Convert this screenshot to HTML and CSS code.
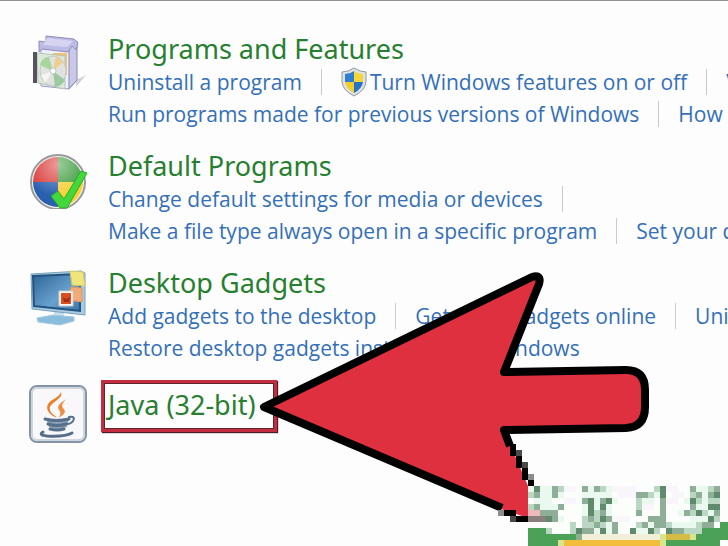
FILE: index.html
```
<!DOCTYPE html>
<html lang="en">
<head>
    <meta charset="UTF-8">
    <title>Control Panel - Programs</title>
    <link rel="stylesheet" href="styles.css">
</head>
<body>
<main class="panel">
    <section class="category">
        <svg class="icon" viewBox="0 0 60 60" aria-hidden="true">
            <path d="M48 55l10-12-10 5z" fill="#d4d2d8"/>
            <path d="M13 12l30 1 5-4v40l-7 8-28-3z" fill="#f0f0fa" stroke="#9a99c2"/>
            <path d="M41 14l8-5v39l-8 9z" fill="#c9c8e8" stroke="#8987b4"/>
            <path d="M11 9l7 1V4l28 3 4 4-2 7-4-4-4 6-26-3-3 3z" fill="#bcbbe3" stroke="#8f8db9"/>
            <path d="M19 6l26 3-6 6-24-2z" fill="#d6d4f1"/>
            <path d="M25 21h14v22H25z" fill="#f1c173"/>
            <path d="M9 21l28 3v33l-27-6z" fill="#dbe8da" stroke="#b6c7ba"/>
            <path d="M5 20h4v31H5z" fill="#55545e"/>
            <ellipse cx="25" cy="39" rx="13" ry="15" fill="#dfe2df" stroke="#c3cac3"/>
            <path d="M25 39L12 33q2-8 9-8z" fill="#a9d69c"/>
            <path d="M25 39l12 9q-4 7-10 7z" fill="#9dc8a2"/>
            <path d="M25 39l3-15 7 6z" fill="#f0cd8c"/>
            <path d="M25 39l-8 12-4-8z" fill="#f7f5f3"/>
            <circle cx="25" cy="39" r="3" fill="#fff" stroke="#c3c5c5"/>
        </svg>
        <div class="content">
            <h2><a href="#">Programs and Features</a></h2>
            <ul class="links">
                <li><a href="#">Uninstall a program</a></li>
                <li>
                    <a href="#" class="admin">
                        <svg class="shield" viewBox="0 0 26 30" aria-hidden="true">
                            <path d="M13 1q6 4 12 4v9q0 9-12 15Q1 23 1 14V5q6 0 12-4z" fill="#dfe3e6" stroke="#8d979f"/>
                            <path d="M13 4v11H4V7q5 0 9-3z" fill="#2e7fd0"/>
                            <path d="M13 4q4 3 9 3v8h-9z" fill="#f6d53a"/>
                            <path d="M4 15h9v11q-8-4-9-11z" fill="#f3cd2c"/>
                            <path d="M13 15h9q-1 7-9 11z" fill="#2873c4"/>
                        </svg>
                        Turn Windows features on or off
                    </a>
                </li>
                <li><a href="#">View installed updates</a></li>
            </ul>
            <ul class="links">
                <li><a href="#">Run programs made for previous versions of Windows</a></li>
                <li><a href="#">How to install a program</a></li>
            </ul>
        </div>
    </section>

    <section class="category">
        <svg class="icon" viewBox="0 0 60 60" aria-hidden="true">
            <defs>
                <radialGradient id="shine" cx="50%" cy="15%" r="65%">
                    <stop offset="0" stop-color="#fff" stop-opacity=".5"/>
                    <stop offset="1" stop-color="#fff" stop-opacity="0"/>
                </radialGradient>
            </defs>
            <circle cx="30" cy="33" r="27" fill="#f3f3f3" stroke="#9a9a9a" stroke-width="2"/>
            <path d="M30 33V8A25 25 0 0 0 5 33z" fill="#d93a38"/>
            <path d="M30 33V8a25 25 0 0 1 25 25z" fill="#3b9a3c"/>
            <path d="M30 33H5a25 25 0 0 0 25 25z" fill="#285fae"/>
            <path d="M30 33h25a25 25 0 0 1-25 25z" fill="#f8cf34"/>
            <circle cx="30" cy="33" r="25" fill="url(#shine)"/>
            <path d="M23 47l7-5 6 8 17-28 6 2-20 35h-7z" fill="#42d83b" stroke="#2cae2b"/>
        </svg>
        <div class="content">
            <h2><a href="#">Default Programs</a></h2>
            <ul class="links trailing">
                <li><a href="#">Change default settings for media or devices</a></li>
            </ul>
            <ul class="links">
                <li><a href="#">Make a file type always open in a specific program</a></li>
                <li><a href="#">Set your default programs</a></li>
            </ul>
        </div>
    </section>

    <section class="category">
        <svg class="icon" viewBox="0 0 60 60" aria-hidden="true">
            <defs>
                <linearGradient id="screen" x1="0" y1="0" x2="1" y2="1">
                    <stop offset="0" stop-color="#2d6496"/>
                    <stop offset=".6" stop-color="#68a2cf"/>
                    <stop offset="1" stop-color="#3673a8"/>
                </linearGradient>
            </defs>
            <path d="M26 44l10 2v8H26z" fill="#c8dfe9"/>
            <path d="M9 52l16-3 21 2v4l-14 4-22-3z" fill="#8abddc" stroke="#a3cce1"/>
            <path d="M3 8l50-3 4 2v42L4 43z" fill="#a9cbe0" stroke="#78a1bd"/>
            <path d="M5 10l47-2v37L6 40z" fill="url(#screen)" stroke="#235481" stroke-width="2"/>
            <path d="M42 5l13 1 2 14-13-1z" fill="#f1e47c" stroke="#d6cc66"/>
            <path d="M43 21l11 1v14l-14-2z" fill="#f2ab78" stroke="#e0965f"/>
            <path d="M31 25h14v15H31z" fill="#fbf8f4" stroke="#cfcac4"/>
            <path d="M33 27h10v11H33z" fill="#d94f21"/>
            <path d="M35 31l3 2 4-2-1 5h-5z" fill="#a92b14"/>
        </svg>
        <div class="content">
            <h2><a href="#">Desktop Gadgets</a></h2>
            <ul class="links">
                <li><a href="#">Add gadgets to the desktop</a></li>
                <li><a href="#">Get more gadgets online</a></li>
                <li><a href="#">Uninstall a gadget</a></li>
            </ul>
            <ul class="links">
                <li><a href="#">Restore desktop gadgets installed with Windows</a></li>
            </ul>
        </div>
    </section>

    <section class="category">
        <svg class="icon" viewBox="0 0 60 60" aria-hidden="true">
            <rect x="2" y="3" width="56" height="56" rx="7" fill="#f8f8fa" stroke="#8493a5" stroke-width="2"/>
            <rect x="4" y="5" width="52" height="52" rx="5" fill="none" stroke="#cdd6de" stroke-width="2"/>
            <path d="M33 9c3 8-13 10-11 18 1 4 5 5 7 8-7-3-12-8-9-14 3-5 11-6 13-12z" fill="#e9812e"/>
            <path d="M38 16c-5 4-10 6-7 11 2 3 2 5-1 8 8-4 8-7 5-10-2-3 0-5 3-9z" fill="#ee8c43"/>
            <path d="M18 35q12 4 23 0l-2 9q-9 4-18 0z" fill="#8fa2b5"/>
            <g fill="none" stroke="#56708b" stroke-width="3" stroke-linecap="round">
                <path d="M17 36q11 3 24 0M20 41q9 3 18 0M22 46q7 2 14 0"/>
                <path d="M41 34q7-1 4 4-2 3-6 3" stroke-width="2"/>
                <path d="M15 49q-5 3 4 4 18 1 25-3"/>
            </g>
        </svg>
        <div class="content">
            <h2 class="marked"><a href="#">Java (32-bit)</a></h2>
        </div>
    </section>
</main>

<svg class="arrow" width="728" height="546" viewBox="0 0 728 546" aria-hidden="true">
    <path d="M264 407L532 277q10-3 7 7l-35 88 122-2q19 0 19 20v17q0 20-19 21l-122 2 24 56v32l-30-10z" fill="#df3040"/>
    <path d="M510 446L504 430l122-2q19-1 19-21v-17q0-20-19-20l-122 2 35-88q3-10-7-7L264 407l238 101" fill="none" stroke="#000" stroke-width="8" stroke-linejoin="round"/>
    <g shape-rendering="crispEdges">
        <path d="M510 444h6v12h-6zM516 456h6v12h-6zM522 468h6v12h-6zM528 480h6v6h-6zM504 510h12v6h-12zM516 516h12v6h-12z"/>
        <path d="M516 450h6v6h-6zM522 462h6v6h-6zM510 516h6v6h-6z" fill="#4a4a4a"/>
        <path d="M528 474h6v6h-6zM498 510h6v6h-6z" fill="#8c8c8c"/>
    </g>
</svg>

<svg class="mosaic" width="200" height="60" viewBox="0 0 200 60" shape-rendering="crispEdges" aria-hidden="true">
    <path d="M0 0h200v60H0z" fill="#fcfefc"/>
    <g transform="scale(6)" fill="none" stroke-width="1">
        <path stroke="#e9f9ef" d="M0 .5h1M2 .5h2M10 .5h1M13 .5h1M28 .5h2M2 1.5h2M5 1.5h1M9 1.5h5M21 1.5h1M29 1.5h1M1 2.5h3M11 2.5h1M14 2.5h1M19 2.5h2M26 2.5h1M29 2.5h1M2 3.5h3M9 3.5h1M11 3.5h1M13 3.5h1M28 3.5h2M9 4.5h1M13 4.5h1M25 4.5h1M30 4.5h1M5 5.5h1M27 5.5h3M13 6.5h1M20 6.5h1M24 6.5h4M11 7.5h1M13 7.5h1M18 7.5h2"/>
        <path stroke="#f9f6fb" d="M6 .5h2M14 .5h4M23 .5h2M15 1.5h3M24 1.5h2M6 2.5h2M23 2.5h2M19 3.5h2M14 5.5h3"/>
        <path stroke="#b9d7c3" d="M5 .5h1M12 .5h1M21 .5h1M30 .5h1M0 1.5h1M20 1.5h1M27 1.5h1M18 2.5h1M28 2.5h1M30 2.5h2M0 3.5h1M18 3.5h1M11 4.5h1M27 4.5h1M29 4.5h1M9 5.5h1M11 5.5h1M31 5.5h1M7 6.5h1M9 6.5h2M12 6.5h1M18 6.5h1M23 6.5h1M28 6.5h1M3 7.5h1M7 7.5h1M21 7.5h1M26 7.5h3"/>
        <path stroke="#8fae98" d="M4 .5h1M9 .5h1M11 .5h1M27 .5h1M31 .5h1M1 1.5h1M4 1.5h1M18 1.5h2M28 1.5h1M30 1.5h1M9 2.5h1M12 2.5h1M22 2.5h1M1 3.5h1M5 3.5h1M22 3.5h1M27 3.5h1M2 4.5h3M12 4.5h1M18 4.5h1M22 4.5h1M26 4.5h1M31 4.5h1M4 5.5h1M10 5.5h1M13 5.5h1M20 5.5h3M11 6.5h1M14 6.5h1M19 6.5h1M21 6.5h2M29 6.5h2M9 7.5h2M14 7.5h1M24 7.5h2"/>
        <path stroke="#608a6c" d="M1 .5h1M22 .5h1M22 1.5h1M31 1.5h1M10 2.5h1M13 2.5h1M27 2.5h1M10 3.5h1M12 3.5h1M30 3.5h2M10 4.5h1M28 4.5h1M3 5.5h1M12 5.5h1M30 5.5h1M8 7.5h1M12 7.5h1M17 7.5h1M20 7.5h1M23 7.5h1"/>
        <path stroke="#eeb9bd" d="M0 4.5h2"/>
        <path stroke="#8b7f7e" d="M0 5.5h3"/>
        <path stroke="#4ba155" d="M0 7.5h3M29 7.5h5M0 8.5h8M28 8.5h6M0 9.5h5M23 9.5h9M32 6.5h2"/>
        <path stroke="#8eae91" d="M8 8.5h1"/>
        <path stroke="#f1efd8" d="M9 8.5h13"/>
        <path stroke="#d5bc45" d="M23 8.5h4"/>
        <path stroke="#d9e58e" d="M5 9.5h1M22 8.5h1M27 8.5h1M22 9.5h1"/>
        <path stroke="#f1bd3b" d="M6 9.5h16"/>
    </g>
</svg>
</body>
</html>
```
FILE: styles.css
```
* {
    margin: 0;
    padding: 0;
    box-sizing: border-box;
}

html, body {
    height: 100%;
    overflow: hidden;
}

body {
    position: relative;
    border-top: 1px solid #929094;
    background: #fdfdfd;
    font-family: "Open Sans", "Noto Sans", sans-serif;
    font-size: 21px;
    color: #3470b8;
}

ul {
    list-style: none;
}

a {
    color: inherit;
    text-decoration: none;
}

a:hover {
    text-decoration: underline;
}

.panel {
    display: flex;
    flex-direction: column;
    gap: 19px;
    padding: 31px 0 0 28px;
    overflow: hidden;
}

.category {
    display: flex;
    gap: 20px;
}

.icon {
    flex: none;
    width: 60px;
    height: 60px;
}

.content {
    min-width: 0;
    white-space: nowrap;
}

h2 {
    font-family: "Noto Sans", "Open Sans", sans-serif;
    font-size: 27px;
    font-weight: normal;
    line-height: 34px;
    color: #26802f;
}

.marked {
    width: max-content;
    margin: -3px 0 0 -7px;
    padding: 5px 18px 7px 4px;
    border: 3px solid #c42c42;
    outline: 1px solid #5d2530;
    outline-offset: -4px;
    box-shadow: 1px 1px 1px #4a1d27;
}

.links {
    display: flex;
    line-height: 32px;
}

.links li {
    display: flex;
    align-items: center;
}

.links li + li::before,
.trailing li::after {
    content: "";
    width: 1px;
    height: 26px;
    margin: 0 19px;
    background: #cbcbcf;
}

.admin {
    display: flex;
    align-items: center;
    gap: 3px;
}

.shield {
    width: 26px;
    height: 30px;
}

/* overlays */
.arrow {
    position: absolute;
    top: -1px;
    left: 0;
}

.mosaic {
    position: absolute;
    right: 0;
    bottom: 0;
}
```
